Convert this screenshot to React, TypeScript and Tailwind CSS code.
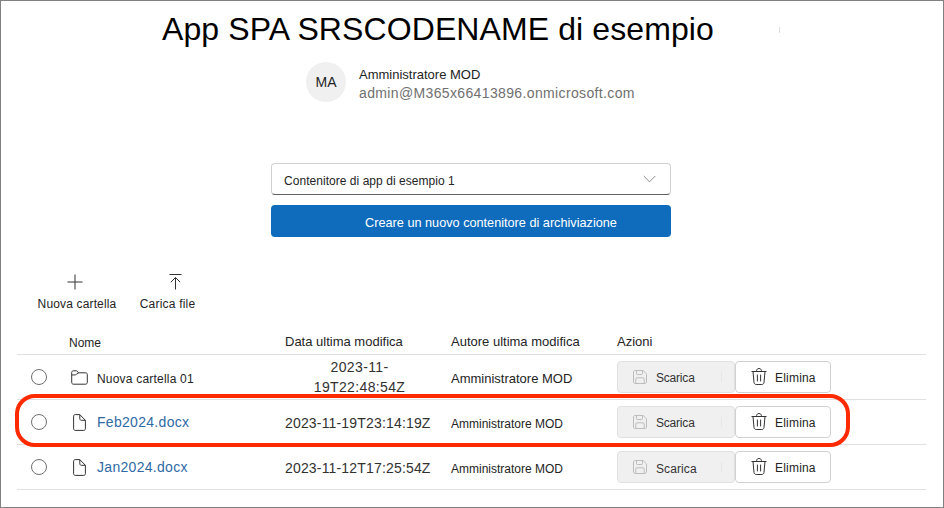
import React from "react";

const font = "font-['Liberation_Sans',Arial,sans-serif]";

function PlusIcon() {
  return (
    <svg width="16" height="16" viewBox="0 0 16 16" fill="none" stroke="#333" strokeWidth="1">
      <path d="M8 .5v15M.5 8h15" />
    </svg>
  );
}
function UploadIcon() {
  return (
    <svg width="13" height="16" viewBox="0 0 13 16" fill="none" stroke="#333" strokeWidth="1">
      <path d="M.5.5h12M6.5 15.5V3.5M1.8 8.2l4.7-4.7 4.7 4.7" />
    </svg>
  );
}
function FolderIcon() {
  return (
    <svg width="17" height="15" viewBox="0 0 17 15" fill="none" stroke="#333" strokeWidth="1">
      <path d="M.7 12.5V2.4C.7 1.5 1.4.8 2.3.8h3.2l2.2 2h7c.9 0 1.6.7 1.6 1.6v8.1c0 .9-.7 1.7-1.6 1.7H2.3c-.9 0-1.6-.8-1.6-1.7ZM.7 5l3.2-.1c.6 0 1.1-.3 1.6-.7l2.2-1.4" />
    </svg>
  );
}
function FileIcon() {
  return (
    <svg width="13" height="17" viewBox="0 0 13 17" fill="none" stroke="#333" strokeWidth="1">
      <path d="M.6 2.2C.6 1.2 1.3.6 2.2.6h4.6l5.6 5.7v8.4c0 1-.7 1.7-1.6 1.7H2.2c-.9 0-1.6-.7-1.6-1.7V2.2ZM6.8.6v4.2c0 .9.7 1.5 1.5 1.5h4.1" />
    </svg>
  );
}
function SaveIcon() {
  return (
    <svg width="14" height="14" viewBox="0 0 14 14" fill="none" stroke="#bdbdbd" strokeWidth="1">
      <path d="M.5 2C.5 1.2 1.2.5 2 .5h8.2l3.3 3.3V12c0 .8-.7 1.5-1.5 1.5H2c-.8 0-1.5-.7-1.5-1.5V2ZM3.5.5v3.2c0 .4.3.8.8.8h4.4c.5 0 .8-.4.8-.8V.5M2.8 13.5V8.7c0-.5.4-.9.9-.9h6.6c.5 0 .9.4.9.9v4.8" />
    </svg>
  );
}
function TrashIcon() {
  return (
    <svg width="16" height="17" viewBox="0 0 16 17" fill="none" stroke="#333" strokeWidth="1">
      <path d="M.5 3.5h15M5.6 3.4V2.6C5.6 1.4 6.6.5 8 .5s2.4.9 2.4 2.1v.8M2 3.6l1 10.9c.1 1.2 1 2 2.2 2h5.6c1.2 0 2.1-.8 2.2-2l1-10.9M6.4 6.6v6.8M9.6 6.6v6.8" />
    </svg>
  );
}

function Row({
  icon,
  name,
  date,
  author,
  scaricaClass,
  nameClass,
  authorClass,
}: {
  icon: React.ReactNode;
  name: string;
  date: React.ReactNode;
  author: string;
  scaricaClass: string;
  nameClass: string;
  authorClass: string;
}) {
  return (
    <div className="grid grid-cols-[52px_216px_166px_166px_1fr] h-[45px] border-b border-[#e0e0e0] items-center">
      <div className="pl-[14px] flex items-center pb-[1px]">
        <span className="block size-4 rounded-full border border-[#707070]" />
      </div>
      <div className="flex items-center">
        <span className="w-[20px] flex justify-center mr-[8px]">{icon}</span>
        <span className={nameClass}>{name}</span>
      </div>
      <div className="text-[14px] leading-[20px] text-[#323130]">{date}</div>
      <div className={authorClass}>{author}</div>
      <div className="flex items-center pb-[1px]">
        <div className="w-[118px] h-[32px] rounded-[4px] border border-[#e0e0e0] bg-[#f0f0f0] flex items-center pl-[15px] pr-[12px]">
          <SaveIcon />
          <span className={`ml-[9px] text-[12px] text-[#333] ${scaricaClass}`}>Scarica</span>
          <span className="ml-auto w-[1px] h-[10px] bg-[#e6e6e6]" />
        </div>
        <div className="w-[96px] h-[32px] rounded-[4px] border border-[#d1d1d1] bg-white flex items-center pl-[15px]">
          <TrashIcon />
          <span className="ml-[8px] text-[12px] tracking-[0.2px] text-[#242424] pt-[2px]">Elimina</span>
        </div>
      </div>
    </div>
  );
}

export default function App() {
  return (
    <div className={`${font} relative w-[944px] h-[508px] border border-[#808080] bg-white text-[#111] overflow-hidden`}>
      <h1 className="pl-[161px] text-[32px] leading-[37px] tracking-[0.1px] pt-[10px] text-black">App SPA SRSCODENAME di esempio</h1>

      <div className="flex items-center pl-[305px] mt-[14px]">
        <div className="size-10 rounded-full bg-[#f0f0f0] flex items-center justify-center text-[14px] text-[#242424]">MA</div>
        <div className="ml-[13px] self-start pt-[4px]">
          <div className="text-[13px] leading-[16px] text-[#242424] pt-[1px]">Amministratore MOD</div>
          <div className="text-[14px] leading-[18px] pt-[1px] tracking-[0.36px] text-[#707070]">admin@M365x66413896.onmicrosoft.com</div>
        </div>
      </div>

      <div className="ml-[270px] w-[400px] mt-[61px]">
        <div className="h-[32px] rounded-[4px] border border-[#d1d1d1] border-b-[#616161] flex items-center justify-between pl-[12px] pr-[14px]">
          <span className="text-[12px] tracking-[0.04px] text-[#242424] pt-[4px]">Contenitore di app di esempio 1</span>
          <svg width="13" height="8" viewBox="0 0 13 8" fill="none" stroke="#8a8a8a" strokeWidth="1">
            <path d="M.7 1l5.8 5.8L12.3 1" />
          </svg>
        </div>
        <div className="h-[32px] mt-[10px] pt-[6px] pl-[40px] rounded-[4px] bg-[#0f6cbd] text-white text-[12.7px] flex items-center justify-center">
          Creare un nuovo contenitore di archiviazione
        </div>
      </div>

      <div className="flex ml-[37px] mt-[36px] text-[12px] text-[#242424] whitespace-nowrap">
        <div className="flex flex-col items-center w-[78px]">
          <span className="h-[17px] flex items-center mr-[4px]"><PlusIcon /></span>
          <span className="mt-[6px] leading-[16px] tracking-[0.15px]">Nuova cartella</span>
        </div>
        <div className="flex flex-col items-center ml-[24px] w-[55px]">
          <span className="h-[17px] flex items-center ml-[16px]"><UploadIcon /></span>
          <span className="mt-[6px] leading-[16px] tracking-[0.2px]">Carica file</span>
        </div>
      </div>

      <div className="ml-[16px] w-[909px] mt-[20px]">
        <div className="grid grid-cols-[52px_216px_166px_166px_1fr] h-[23px] border-b border-[#e0e0e0] text-[13px] text-[#242424]">
          <span />
          <span className="pt-[2px] text-[12px]">Nome</span>
          <span>Data ultima modifica</span>
          <span>Autore ultima modifica</span>
          <span>Azioni</span>
        </div>
        <Row
          icon={<FolderIcon />}
          name="Nuova cartella 01"
          nameClass="text-[12px] tracking-[0.2px] text-[#242424] pt-[4px]"
          date={<div className="text-center w-[149px] tracking-[0.35px]">2023-11-<br />19T22:48:54Z</div>}
          author="Amministratore MOD"
          authorClass="text-[13px] text-[#242424] pt-[3px]"
          scaricaClass="tracking-[-0.2px] pt-[2px]"
        />
        <Row
          icon={<FileIcon />}
          name="Feb2024.docx"
          nameClass="text-[14px] tracking-[0.3px] text-[#2f6aa5] pt-[1px]"
          date={<div className="tracking-[0.17px] pt-[2px]">2023-11-19T23:14:19Z</div>}
          author="Amministratore MOD"
          authorClass="text-[12px] text-[#242424] pt-[4px]"
          scaricaClass="tracking-[-0.2px] pt-[2px]"
        />
        <Row
          icon={<FileIcon />}
          name="Jan2024.docx"
          nameClass="text-[14px] tracking-[0.3px] text-[#2f6aa5] pt-[1px]"
          date={<div className="tracking-[0.17px] pt-[2px]">2023-11-12T17:25:54Z</div>}
          author="Amministratore MOD"
          authorClass="text-[12px] text-[#242424] pt-[4px]"
          scaricaClass="tracking-[0.1px] pt-[5px]"
        />
      </div>

      <div className="absolute left-[14px] top-[393px] w-[835px] h-[53px] rounded-[20px] border-4 border-[#ff2a00]" />
      <div className="absolute left-[778px] top-[26px] w-[1px] h-[6px] bg-[#dddddd]" />
    </div>
  );
}
